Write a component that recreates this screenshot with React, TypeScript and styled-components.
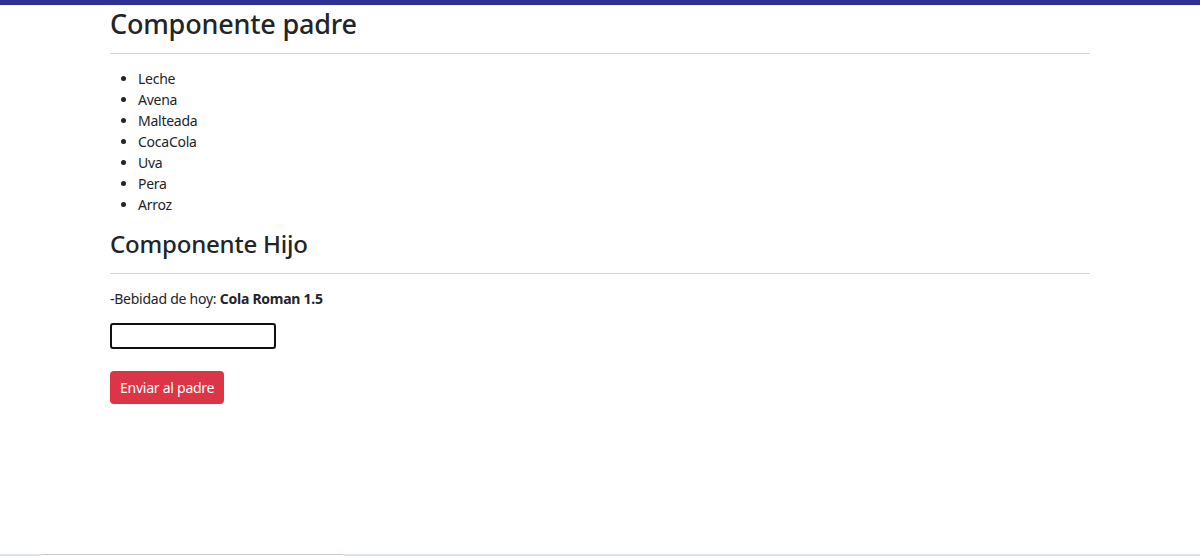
import React, { useState } from "react";
import styled, { createGlobalStyle } from "styled-components";

const GlobalStyle = createGlobalStyle`
    html, body {
        margin: 0;
        padding: 0;
        background: #fff;
    }
    body {
        font-family: "Noto Sans", "Open Sans", sans-serif;
        font-size: 14px;
        line-height: 21px;
        letter-spacing: -0.25px;
        color: #212529;
    }
`;

const Page = styled.div`
    display: flex;
    flex-direction: column;
    height: 100vh;
    overflow: hidden;
`;

const TopBar = styled.div`
    height: 5px;
    flex: none;
    background-color: #2e3192;
`;

const Main = styled.main`
    flex: 1;
    width: 980px;
    margin: 0 auto;
`;

const Title = styled.h2`
    margin: 2px 0 0;
    font-size: 27px;
    font-weight: 500;
    line-height: 34px;
    letter-spacing: -0.2px;
    color: #212529;
`;

const SubTitle = styled.h3`
    margin: 0;
    font-size: 24px;
    font-weight: 500;
    line-height: 29px;
    letter-spacing: -0.2px;
    color: #212529;
`;

const Rule = styled.hr<{ $top: number }>`
    margin: ${props => props.$top}px 0 14px;
    border: 0;
    border-top: 1px solid #d3d4d5;
`;

const List = styled.ul`
    margin: 0 0 14px;
    padding-left: 28px;
`;

const Text = styled.p`
    margin: 0 0 14px;
`;

const Input = styled.input`
    display: block;
    box-sizing: border-box;
    width: 166px;
    height: 26px;
    margin: 0 0 22px;
    border: 2px solid #111;
    border-radius: 3px;
    font: inherit;
    padding: 0 4px;
    outline: none;
`;

const Button = styled.button`
    display: block;
    box-sizing: border-box;
    height: 33px;
    padding: 0 10px;
    border: none;
    border-radius: 4px;
    background-color: #dc3545;
    color: #fff;
    font-family: inherit;
    font-size: 14px;
    letter-spacing: -0.25px;
    cursor: pointer;
`;

const Taskbar = styled.div`
    display: flex;
    height: 2px;
    flex: none;
    background-color: #d6e7ef;
`;

const TaskSlot = styled.div<{ $width: number; $light?: boolean }>`
    width: ${props => props.$width}px;
    flex: none;
    background-color: ${props => (props.$light ? "#fff" : "#d6e7ef")};
    border-top: ${props => (props.$light ? "1px solid #c9c9c9" : "none")};
    box-sizing: border-box;
`;

const items = ["Leche", "Avena", "Malteada", "CocaCola", "Uva", "Pera", "Arroz"];

export default function App() {
    const [value, setValue] = useState("");
    const [drink] = useState("Cola Roman 1.5");

    return (
        <Page>
            <GlobalStyle />
            <TopBar />
            <Main>
                <Title>Componente padre</Title>
                <Rule $top={12} />
                <List>
                    {items.map(item => (
                        <li key={item}>{item}</li>
                    ))}
                </List>
                <SubTitle>Componente Hijo</SubTitle>
                <Rule $top={15} />
                <Text>
                    -Bebidad de hoy: <b>{drink}</b>
                </Text>
                <Input value={value} onChange={e => setValue(e.currentTarget.value)} />
                <Button>Enviar al padre</Button>
            </Main>
            <Taskbar>
                <TaskSlot $width={42} />
                <TaskSlot $width={301} $light />
            </Taskbar>
        </Page>
    );
}
